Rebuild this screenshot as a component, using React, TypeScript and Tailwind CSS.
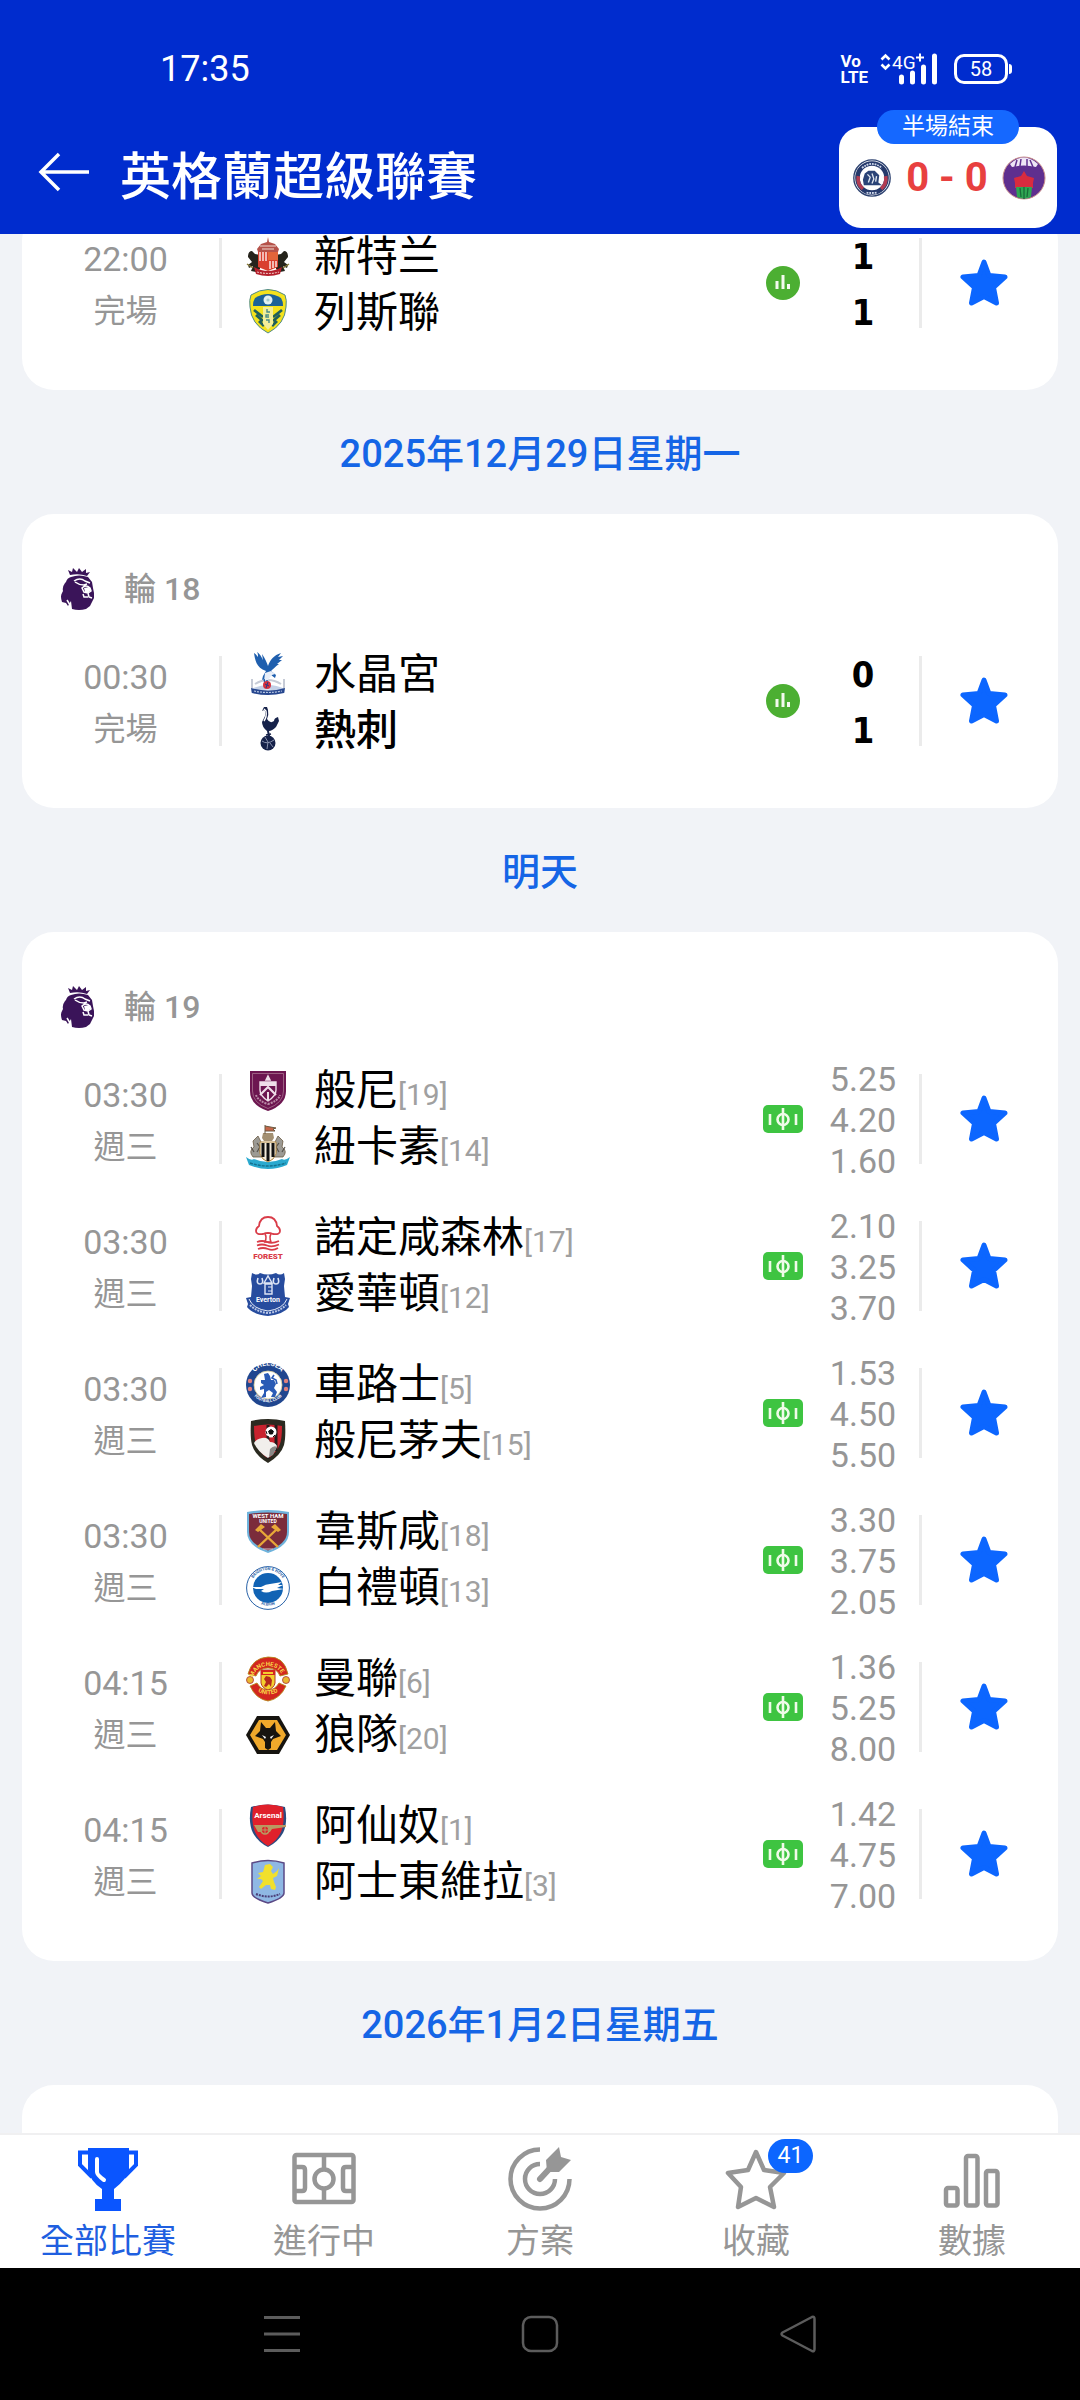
import type { ReactNode } from "react";

const CJK = "font-['Roboto','Noto_Sans_CJK_TC',sans-serif]";
const BLUE = "#0c66ff";
const GREY = "#969696";

/* ---------- club crests, all on a 44 x 44 box ---------- */

function Crest({ title, children }: { title: string; children: ReactNode }) {
  return (
    <svg viewBox="0 0 44 44" className="size-11 shrink-0 overflow-visible" role="img" aria-label={title}>
      {children}
    </svg>
  );
}

const crests: Record<string, ReactNode> = {
  sunderland: (
    <>
      <path d="M2 24q0-6 4-6l3 3q4 0 5 3v12l-4 3-5-1 2-5-4 2-1-3 4-3zM42 24q0-6-4-6l-3 3q-4 0-5 3v12l4 3 5-1-2-5 4 2 1-3-4-3z" fill="#26241c" />
      <path d="M1 31l6 4M43 31l-6 4" stroke="#8a7d3c" strokeWidth="1.5" />
      <path d="M22 4l1 5 6 2 4 5-1 3H12l-1-3 4-5 6-2z" fill="#b5524a" />
      <path d="M14 13h16M16 16h12" stroke="#f0d8d0" strokeWidth="1" />
      <path d="M12 19h20v15l-10 4-10-4z" fill="#d93f2e" />
      <path d="M22 19h10v8H22z" fill="#e2643a" />
      <path d="M14 19v9M17 19v9M20 19v9M24 28v8M27 28v7M30 28v6" stroke="#fbeeee" strokeWidth="1.4" />
      <path d="M8 34q14 8 28 0l-2 7q-12 4-24 0z" fill="#b5202c" />
      <path d="M11 39q11 3 22 0" stroke="#e9b8b4" strokeWidth="1.2" strokeDasharray="2 1" fill="none" />
    </>
  ),
  leeds: (
    <>
      <path d="M5 6Q22-5 39 6q2 5 1 12-1 17-18 26Q5 35 4 18 3 11 5 6z" fill="#f4e21c" stroke="#4f8a8c" strokeWidth="1" />
      <path d="M9 9q13-8 26 0 2 3 2 8H7q0-5 2-8z" fill="#1b6297" />
      <circle cx="22" cy="11" r="4.5" fill="#e3f1f2" />
      <circle cx="22" cy="11" r="1.6" fill="#a8cdd0" />
      <path d="M8 21l9 7M10 26l7 6M13 32l5 5M36 21l-9 7M34 26l-7 6M31 32l-5 5" stroke="#1f5f5c" strokeWidth="2.8" />
      <path d="M7 18h30" stroke="#f4e21c" strokeWidth="1.5" />
      <path d="M17 18h10v17l-5 6-5-6z" fill="#f3ee9a" />
      <path d="M21 20v3h3M23 26h-3v2h3M20 31h3v3" stroke="#4c8c88" strokeWidth="1.4" fill="none" />
    </>
  ),
  palace: (
    <>
      <path d="M6 28v10M38 28v10M9 33q13-8 26 0" stroke="#c6cbd6" strokeWidth="2" fill="none" />
      <path d="M5 38q17-8 34 0v4q-17-7-34 0z" fill="#c3d0e6" />
      <path d="M20 20C10 17 9 8 8 2c3 2 3 3 4 4 0-2 0-3-1-5 4 3 5 6 6 8l-1-6c3 4 5 9 6 12 2-6 6-11 13-13l-3 4 5-1-4 4 3 0-5 4 2 0c-4 3-6 5-8 7l5 4-1 3-4-3-5 3-4 2 1-4z" fill="#1f5fae" />
      <path d="M19 22l6-2 4 3-3 1-4 5-4 1z" fill="#e8eef8" />
      <path d="M18 28l1 4M21 29l0 3" stroke="#1f5fae" strokeWidth="1.5" />
      <circle cx="21" cy="34" r="4" fill="#d5323f" />
      <path d="M19 33l4 2M22 31l-2 6" stroke="#2a3c86" strokeWidth="1" />
      <path d="M5 37q17 5 34 0l-1 5q-16 4-32 0z" fill="#27478f" />
      <path d="M8 40q14 3 28 0" stroke="#b9c8e4" strokeWidth="1.2" fill="none" strokeDasharray="2 1" />
    </>
  ),
  spurs: (
    <>
      <path d="M18 0h3l1 3q1 5-1 9 3 5 7 2 0-3 4-4l1 4-3 6q-4 4-7 4l1 5-2 0-1-5q-5-4-5-9l3-6q1-5-1-6l-2 1z" fill="#16224a" />
      <path d="M18 2l2 2q1 6-2 10" stroke="#fff" strokeWidth="1.4" fill="none" />
      <path d="M20 28l5-1" stroke="#16224a" strokeWidth="1.5" />
      <circle cx="22" cy="36" r="7.5" fill="#16224a" />
      <path d="M16 34q5 4 12-1M19 30l3 5-1 7M24 36l3 4" stroke="#8992ae" strokeWidth="1" fill="none" />
    </>
  ),
  burnley: (
    <>
      <path d="M4 2h36v20q0 14-18 20Q4 36 4 22z" fill="#6d1650" />
      <path d="M6.5 4.5h31V22q0 12-15.5 17.5Q6.5 34 6.5 22z" fill="none" stroke="#a8728f" strokeWidth="0.8" />
      <path d="M14 13h16v8q0 6-8 11-8-5-8-11z" fill="none" stroke="#efdfe9" strokeWidth="1.4" />
      <path d="M14 13h16v4H14z" fill="#efdfe9" />
      <path d="M22 7l2 4h-4z" fill="#efdfe9" stroke="#efdfe9" strokeWidth="1.5" />
      <path d="M14 26l8-8 8 8" stroke="#efdfe9" strokeWidth="2.2" fill="none" />
      <path d="M22 23v8" stroke="#efdfe9" strokeWidth="2" />
      <path d="M10 26q2 6 12 9 10-3 12-9" fill="none" stroke="#b98aa6" strokeWidth="2" strokeDasharray="2 1" />
    </>
  ),
  newcastle: (
    <>
      <path d="M0 32q5 4 8 2 14 6 28 0 3 2 8-2l-3 8q-19 8-38 0z" fill="#2aa9cf" />
      <path d="M4 38q18 6 36 0" stroke="#14718f" strokeWidth="1.4" strokeDasharray="3 1" fill="none" />
      <path d="M7 32q-5-6 1-10l-1-6 5-5 3 6-2 7 3 8zM37 32q5-6-1-10l1-6-5-5-3 6 2 7-3 8z" fill="#9c9a94" stroke="#6b5a42" strokeWidth="0.8" />
      <path d="M11 18l3 4-3 5M33 18l-3 4 3 5M5 22l3 5M39 22l-3 5" stroke="#55504a" strokeWidth="1.2" fill="none" />
      <path d="M16 13l1-5h10l1 5-2 3h-8z" fill="#a39072" />
      <path d="M19 0v9M19 1l11 2-3 1 2 2H19" fill="#c4674a" stroke="#6b5a42" strokeWidth="1" />
      <path d="M14 17h16v12q-2 6-8 8-6-2-8-8z" fill="#f3ecdc" stroke="#b48b45" strokeWidth="1" />
      <path d="M17 18v14M22 18v18M27 18v14" stroke="#111" strokeWidth="3" />
    </>
  ),
  forest: (
    <>
      <path d="M17 18q-7 1-7-3 0-3 3-5 1-9 9-9t9 9q3 2 3 5 0 4-7 3-5-2-10 0z" fill="#fff" stroke="#d93c48" strokeWidth="1.8" />
      <path d="M19 18q2 3 0 8h6q-2-5 0-8" fill="#fff" stroke="#d93c48" strokeWidth="1.6" />
      <path d="M11 26q5-2 10 0t12-1M11 29.5q5-2 10 0t12-1M12 33q5-2 10 0t10-1" stroke="#d93c48" strokeWidth="1.8" fill="none" />
      <text x="22" y="43" textAnchor="middle" fontSize="8" fontWeight="900" fill="#d93c48" className="font-[Roboto]">
        FOREST
      </text>
    </>
  ),
  everton: (
    <>
      <path d="M6 1q5 3 8 0 8 3 16 0 4 3 8 0l1 6-1 7 1 11 5 1-2 6 1 3q-5 7-21 9Q6 42 1 35l1-3-2-6 5-1 1-11-1-7z" fill="#274c9e" />
      <path d="M12 6q-2 6 2 6t2-6M28 6q-2 6 2 6t2-6" stroke="#dfe6f5" strokeWidth="1.6" fill="none" />
      <path d="M18 11l4-7 4 7zM19 12h7v10h-7z" fill="none" stroke="#dfe6f5" strokeWidth="1.4" />
      <path d="M22 15h4M22 19h4" stroke="#dfe6f5" strokeWidth="1.2" />
      <path d="M3 27q4 10 19 12 15-2 19-12" fill="none" stroke="#e8edf8" strokeWidth="1" />
      <path d="M4 33q7 7 18 8 11-1 18-8" fill="none" stroke="#b9c6e6" strokeWidth="2" strokeDasharray="2 1" />
      <text x="22" y="30" textAnchor="middle" fontSize="7" fontWeight="700" fill="#fff" className="font-[Roboto]">
        Everton
      </text>
    </>
  ),
  chelsea: (
    <>
      <circle cx="22" cy="22" r="22" fill="#20468f" />
      <circle cx="22" cy="22" r="14" fill="#fff" stroke="#d8cf9a" strokeWidth="0.8" />
      <path d="M18 11l4-1 2 3 1 4 3 0 2 4-2 4 3 4-2 5-4 0 2-4-4-3-3 2 0 5-5 1 3-5 0-4-4 1 0-3 4-2-3-2 0-3 4 0z" fill="#2a5bb5" />
      <path d="M28 12l-2 3 4 2 1 4" stroke="#2a5bb5" strokeWidth="1.6" fill="none" />
      <g fill="#e0807c">
        <circle cx="4" cy="18" r="2.2" />
        <circle cx="4" cy="26" r="2.2" />
        <circle cx="40" cy="18" r="2.2" />
        <circle cx="40" cy="26" r="2.2" />
      </g>
      <path id="chelseaTop" d="M5.5 19a16.5 16.5 0 0 1 33 0" fill="none" />
      <path id="chelseaLow" d="M3 24a19.5 19.5 0 0 0 38 0" fill="none" />
      <text fontSize="7" fontWeight="700" fill="#fff" className="font-[Roboto]">
        <textPath href="#chelseaTop" startOffset="50%" textAnchor="middle">CHELSEA</textPath>
      </text>
      <text fontSize="4" fontWeight="700" fill="#fff" className="font-[Roboto]">
        <textPath href="#chelseaLow" startOffset="50%" textAnchor="middle">FOOTBALL CLUB</textPath>
      </text>
    </>
  ),
  bournemouth: (
    <>
      <path d="M5 2q17-4 34 0 1 16-1 24-3 10-16 18Q9 36 6 26 4 18 5 2z" fill="#2b2a20" />
      <path d="M8 7q14-3 28 0 0 12-2 18-3 8-12 15-9-7-12-15Q8 19 8 7z" fill="#c8232e" />
      <path d="M22 6v34M30 6v26" stroke="#231a1a" strokeWidth="3" />
      <path d="M8 24q2-4 8-5 6-1 8 4 5 0 7 4-2 7-9 12-10-6-14-15z" fill="#f1efec" />
      <path d="M24 30q4-4 7-2l-4 8-4 2z" fill="#8b8a88" />
      <circle cx="25" cy="13" r="5.5" fill="#fff" />
      <path d="M25 10.5l2.4 1.7-1 2.8h-2.8l-1-2.8zM20 12l1 3M29 16l-2 2M23 18l-2-1" fill="#111" stroke="#111" strokeWidth="1" />
    </>
  ),
  westham: (
    <>
      <path d="M1 2q21-4 42 0v20q0 14-21 21Q1 36 1 22z" fill="#6fb3dc" />
      <path d="M3 4q19-3 38 0v18q0 12-19 18.5Q3 34 3 22z" fill="#7b2c3b" />
      <path d="M13 19l19 18M31 19L12 37" stroke="#e8a838" strokeWidth="2.4" />
      <path d="M9 20l6-6 4 3-7 5zM35 20l-6-6-4 3 7 5z" fill="#e8a838" />
      <text x="22" y="8" textAnchor="middle" fontSize="6" fontWeight="700" fill="#fff" className="font-[Roboto]">
        WEST HAM
      </text>
      <text x="22" y="13" textAnchor="middle" fontSize="5" fontWeight="700" fill="#fff" className="font-[Roboto]">
        UNITED
      </text>
      <path d="M17 39h10" stroke="#d9b9c0" strokeWidth="1" />
    </>
  ),
  brighton: (
    <>
      <circle cx="22" cy="22" r="21.4" fill="#fff" stroke="#2862a8" strokeWidth="1" />
      <circle cx="22" cy="22" r="15" fill="#1163b4" />
      <path d="M5 21l10 0q5-3 9-3l12-2-4 3 5 0-6 3 7 1-12 2q-6 3-11 0l3-2-8 0z" fill="#fff" />
      <path id="brightonTop" d="M5 21a17 17 0 0 1 34 0" fill="none" />
      <path id="brightonLow" d="M2.5 24a20 20 0 0 0 39 0" fill="none" />
      <text fontSize="4" fontWeight="700" fill="#2862a8" className="font-[Roboto]">
        <textPath href="#brightonTop" startOffset="50%" textAnchor="middle">BRIGHTON &amp; HOVE</textPath>
      </text>
      <text fontSize="4" fontWeight="700" fill="#2862a8" className="font-[Roboto]">
        <textPath href="#brightonLow" startOffset="50%" textAnchor="middle">ALBION</textPath>
      </text>
    </>
  ),
  united: (
    <>
      <circle cx="22" cy="22" r="15" fill="#fff" />
      <path d="M2 17Q6 1 22 0t20 17l-8 2q-3-8-12-8t-12 8zM4 29q6 13 18 15 12-2 18-15l-7-3q-4 7-11 7t-11-7z" fill="#d3261f" stroke="#b58a1c" strokeWidth="0.9" />
      <circle cx="4" cy="23" r="3.5" fill="#e9b830" stroke="#aa3333" strokeWidth="0.8" />
      <circle cx="40" cy="23" r="3.5" fill="#e9b830" stroke="#aa3333" strokeWidth="0.8" />
      <path d="M15 13h14v13q-1 5-7 7-6-2-7-7z" fill="#f3cf2e" stroke="#b33a20" strokeWidth="1" />
      <path d="M15 13h14v5H15z" fill="#d3261f" />
      <path d="M17 16h10" stroke="#f3cf2e" strokeWidth="2" />
      <path d="M20 19l4 1 2 3-1 7-2-3-3 3-2-1 2-4-2-3z" fill="#b52a1d" />
      <path id="unitedTop" d="M8 18a15 14 0 0 1 28 0" fill="none" />
      <path id="unitedLow" d="M6 29a17.5 14 0 0 0 32 0" fill="none" />
      <text fontSize="6" fontWeight="700" fill="#f8d648" className="font-[Roboto]">
        <textPath href="#unitedTop" startOffset="50%" textAnchor="middle">MANCHESTER</textPath>
      </text>
      <text fontSize="6" fontWeight="700" fill="#f8d648" className="font-[Roboto]">
        <textPath href="#unitedLow" startOffset="50%" textAnchor="middle">UNITED</textPath>
      </text>
    </>
  ),
  wolves: (
    <>
      <path d="M11 3h22l11 19-11 19H11L0 22z" fill="#16140f" />
      <path d="M13 7h18l9 15-9 15H13L4 22z" fill="#f0a92b" />
      <path d="M15 9l5 6h4l5-6 1 9 5 5-8 3-2 3v6l-3 2-3-2v-6l-2-3-8-3 5-5z" fill="#16140f" />
      <path d="M16 22l4 2-1 2zM28 22l-4 2 1 2z" fill="#fff" />
    </>
  ),
  arsenal: (
    <>
      <path d="M5 3q17-5 34 0 3 16-2 26-5 9-15 14Q12 38 7 29 2 19 5 3z" fill="#2a4b80" />
      <path d="M7 3q15-5 30 0 2 15-2 25-4 9-13 14-9-5-13-14Q5 18 7 3z" fill="#e0202b" />
      <path d="M8 21h32v2l-14 2-2 3H12z" fill="#b89a62" />
      <circle cx="19" cy="26" r="4" fill="#e0202b" stroke="#b89a62" strokeWidth="1.7" />
      <path d="M19 22v8M15 26h8" stroke="#b89a62" strokeWidth="1" />
      <text x="22" y="14" textAnchor="middle" fontSize="8" fontWeight="700" fill="#fff" className="font-[Roboto]">
        Arsenal
      </text>
    </>
  ),
  villa: (
    <>
      <path d="M6 3q16-5 32 0v30q0 5-16 10Q6 38 6 33z" fill="#8fb8e4" stroke="#5b4a86" strokeWidth="1.5" />
      <path d="M19 5l5-1 3 3-2 4 2 3 4-3 2-3-2 8-4 2 1 4 2 5-1 3-4-1-1-4-4 0-5 4-2-2 4-6-2-2-4 0 4-3-3-3 5-1z" fill="#f1e02c" />
      <path d="M10 34q12 5 24 0" stroke="#4b3e78" strokeWidth="2" strokeDasharray="2 1" fill="none" />
    </>
  ),
  arema: (
    <>
      <circle cx="22" cy="22" r="20" fill="#fff" stroke="#2d4270" strokeWidth="1.5" />
      <circle cx="22" cy="22" r="16" fill="none" stroke="#25396b" strokeWidth="5" />
      <path d="M7 20a15 15 0 0 0 5 14M37 20a15 15 0 0 1-5 14" stroke="#b23d52" strokeWidth="4" fill="none" />
      <path d="M14 17l4-3 7 0 5 5-1 8 4 3H13l-1-6z" fill="#2a4377" />
      <path d="M17 18l3 3-2 6M22 17l2 6-2 5M27 20l-1 6" stroke="#dfe6f0" strokeWidth="1.5" fill="none" />
      <path d="M11 11q11-9 22 0M16 38q6 1 12 0" stroke="#cfd8ea" strokeWidth="2" strokeDasharray="2 1" fill="none" />
    </>
  ),
  persik: (
    <>
      <circle cx="22" cy="22" r="21" fill="#5f2f8f" stroke="#c98d8a" strokeWidth="1" />
      <path d="M8 8Q22-5 36 8l-2 3q-12-3-24 0z" fill="#eee6f5" />
      <path d="M13 11l2-7M18 10l1-7M25 10V3M31 11l-3-7" stroke="#5f2f8f" strokeWidth="1.5" />
      <path d="M22 15l3 5 7 2-1 5 0 5H13v-5l-1-5 7-2z" fill="#d92b3f" />
      <path d="M14 31h16l-1 10q-7 3-14 0z" fill="#2fa653" />
      <path d="M22 31v12M18 32l1 9M26 32l-1 9" stroke="#186b39" strokeWidth="1.3" />
    </>
  ),
};

/* ---------- small icons ---------- */

function LeagueLion() {
  return (
    <svg viewBox="0 0 36 42" className="h-[42px] w-9" role="img" aria-label="英超">
      <path d="M10 7L8 2l4 2 1-4 4 4 2-4 3 4 4-3v4l4-1-3 4q-8-3-17-1z" fill="#3a1459" />
      <path d="M11 9q8-3 17 0l4 5 1 6 1 5 0 5-4 8-4 3q-7 2-14 0l-1-8-3 5-2-3-4-1q-2-6 0-9l1-2q-1-4 2-8l1-1q1-4 5-5z" fill="#3a1459" />
      <path d="M14 13q6-4 11 0l5 2M15 14q4 3 9 3l3-1M22 20q4-4 8 0l1 3-3 2-4-1zM28 25l1 4 3 1M23 26l1 3 4 0" stroke="#fff" strokeWidth="1.5" fill="none" />
      <path d="M24 20l5-1 2 3-3 3-3-1z" fill="#fff" />
      <path d="M7 32l3 5" stroke="#fff" strokeWidth="1.5" />
    </svg>
  );
}

function StatsBadge() {
  return (
    <svg viewBox="0 0 34 34" className="size-[34px]" aria-hidden="true">
      <circle cx="17" cy="17" r="17" fill="#4caf32" />
      <path d="M11 15v8M17 9v14M22.5 18v5" stroke="#f3faee" strokeWidth="3" />
    </svg>
  );
}

function PitchBadge() {
  return (
    <svg viewBox="0 0 40 28" className="h-7 w-10" aria-hidden="true">
      <rect width="40" height="28" rx="5" fill="#3ec441" />
      <path d="M7 9v11M33 9v11M20 3v22" stroke="#f0fbe9" strokeWidth="2.6" />
      <circle cx="20" cy="14.5" r="5.5" fill="none" stroke="#f0fbe9" strokeWidth="2.6" />
    </svg>
  );
}

function FilledStar() {
  return (
    <svg viewBox="0 0 48 48" className="size-12" aria-hidden="true">
      <path
        d="M24 3l5 13.500 16 1.500L33.500 28.500 36.500 44 24 37.500 11.500 44l3-15.500L3 18l16-1.500z"
        fill={BLUE}
        stroke={BLUE}
        strokeWidth="5"
        strokeLinejoin="round"
      />
    </svg>
  );
}

/* ---------- data ---------- */

type Team = { name: string; crest: string; rank?: number; winner?: boolean };
type Match = { time: string; note: string; home: Team; away: Team; score?: [number, number]; odds?: string[] };

const sunday: Match[] = [
  { time: "22:00", note: "完場", home: { name: "新特兰", crest: "sunderland" }, away: { name: "列斯聯", crest: "leeds" }, score: [1, 1] },
];

const monday: Match[] = [
  { time: "00:30", note: "完場", home: { name: "水晶宮", crest: "palace" }, away: { name: "熱刺", crest: "spurs", winner: true }, score: [0, 1] },
];

const tomorrow: Match[] = [
  { time: "03:30", note: "週三", home: { name: "般尼", crest: "burnley", rank: 19 }, away: { name: "紐卡素", crest: "newcastle", rank: 14 }, odds: ["5.25", "4.20", "1.60"] },
  { time: "03:30", note: "週三", home: { name: "諾定咸森林", crest: "forest", rank: 17 }, away: { name: "愛華頓", crest: "everton", rank: 12 }, odds: ["2.10", "3.25", "3.70"] },
  { time: "03:30", note: "週三", home: { name: "車路士", crest: "chelsea", rank: 5 }, away: { name: "般尼茅夫", crest: "bournemouth", rank: 15 }, odds: ["1.53", "4.50", "5.50"] },
  { time: "03:30", note: "週三", home: { name: "韋斯咸", crest: "westham", rank: 18 }, away: { name: "白禮頓", crest: "brighton", rank: 13 }, odds: ["3.30", "3.75", "2.05"] },
  { time: "04:15", note: "週三", home: { name: "曼聯", crest: "united", rank: 6 }, away: { name: "狼隊", crest: "wolves", rank: 20 }, odds: ["1.36", "5.25", "8.00"] },
  { time: "04:15", note: "週三", home: { name: "阿仙奴", crest: "arsenal", rank: 1 }, away: { name: "阿士東維拉", crest: "villa", rank: 3 }, odds: ["1.42", "4.75", "7.00"] },
];

/* ---------- match list ---------- */

function TeamLine({ team }: { team: Team }) {
  return (
    <div className="flex h-14 items-center gap-6">
      <Crest title={team.name}>{crests[team.crest]}</Crest>
      <p className={`pt-1 text-[42px] leading-[56px] whitespace-nowrap text-black ${team.winner ? "font-medium" : ""}`}>
        {team.name}
        {team.rank && <span className="text-[30px] text-[#a0a0a0]">[{team.rank}]</span>}
      </p>
    </div>
  );
}

function MatchRow({ match }: { match: Match }) {
  return (
    <li className="flex h-[147px] items-center">
      <div className="flex w-[197px] flex-col items-center pt-1 pl-[10px] text-[#969696]">
        <time className="text-[34px] leading-[52px]">{match.time}</time>
        <span className="text-[32px] leading-[52px]">{match.note}</span>
      </div>
      <span className="h-[90px] w-[3px] bg-[#ebebeb]" />
      <div className="flex-1 pl-6">
        <TeamLine team={match.home} />
        <TeamLine team={match.away} />
      </div>
      <div className="flex w-10 justify-center">{match.score ? <StatsBadge /> : <PitchBadge />}</div>
      <div className="ml-[18px] flex w-[84px] flex-col items-center pt-1">
        {match.score?.map((goals, i) => (
          <span key={i} className="font-['DejaVu_Sans_Condensed','DejaVu_Sans',sans-serif] text-[36px] leading-[56px] font-bold text-black">
            {goals}
          </span>
        ))}
        {match.odds?.map((odd, i) => (
          <span key={i} className="text-[34px] leading-[41px] text-[#969696]">{odd}</span>
        ))}
      </div>
      <span className="ml-[14px] h-[90px] w-[3px] bg-[#ebebeb]" />
      <div className="flex w-[136px] justify-center pr-3">
        <button type="button" aria-label="收藏" aria-pressed="true">
          <FilledStar />
        </button>
      </div>
    </li>
  );
}

function MatchCard({ round, matches }: { round?: number; matches: Match[] }) {
  return (
    <section className="mx-[22px] rounded-[32px] bg-white pb-[34px]">
      {round && (
        <div className="flex h-[113px] items-center gap-7 pt-9 pl-[38px] text-[#969696]">
          <LeagueLion />
          <h3 className="text-[32px] leading-10 font-medium">輪 {round}</h3>
        </div>
      )}
      <ul>
        {matches.map((m) => (
          <MatchRow key={m.home.name} match={m} />
        ))}
      </ul>
    </section>
  );
}

function DateHeading({ children }: { children: ReactNode }) {
  return (
    <h2 className="flex h-[124px] items-center justify-center pt-1 text-[38px] leading-[48px] font-medium text-[#1565e6]">
      {children}
    </h2>
  );
}

/* ---------- header ---------- */

function StatusBar() {
  return (
    <div className="flex h-[110px] items-center justify-between pt-7 pr-[68px] pl-40">
      <span className="text-[36px] leading-[44px]">17:35</span>
      <div className="flex items-center">
        <span className="mr-3 text-[17px] leading-[16px] font-bold">
          Vo
          <br />
          LTE
        </span>
        <svg viewBox="0 0 58 32" className="h-8 w-[58px] overflow-visible" aria-label="4G+" role="img">
          <path d="M1.5 6.5l4-4 4 4M1.5 11.5l4 4 4-4" stroke="#fff" strokeWidth="2.6" fill="none" />
          <text x="12" y="16" fontSize="19" fill="#fff" className="font-[Roboto]">4G</text>
          <path d="M36 4.5h8M40 0.5v8" stroke="#fff" strokeWidth="2" />
          <path d="M21.5 24v5M32.5 20v9M43.5 14v15M54.5 3v26" stroke="#fff" strokeWidth="5" strokeLinecap="round" />
        </svg>
        <div className="ml-4 flex h-[30px] w-[54px] items-center justify-center rounded-[10px] border-3 border-white text-[20px] leading-6">
          58
        </div>
        <span className="ml-px h-[10px] w-[3px] rounded-r-sm bg-white" />
      </div>
    </div>
  );
}

function LiveScore() {
  return (
    <a href="#live" className="mr-[23px] flex w-[218px] flex-col items-center">
      <span className="z-10 -mb-[17px] rounded-full bg-[#1568ff] px-[25px] text-[23px] leading-[34px] text-white">半場結束</span>
      <span className="flex h-[101px] w-full items-center justify-between rounded-[22px] bg-white pr-[11px] pl-[13px]">
        <svg viewBox="0 0 44 44" className="size-10" aria-hidden="true">{crests.arema}</svg>
        <strong className="text-[40px] leading-[44px] font-bold whitespace-nowrap text-[#e8403f]">0 - 0</strong>
        <svg viewBox="0 0 44 44" className="size-11" aria-hidden="true">{crests.persik}</svg>
      </span>
    </a>
  );
}

function Header() {
  return (
    <header className="z-10 shrink-0 bg-[#002cce] text-white">
      <StatusBar />
      <div className="flex h-[124px] items-start justify-between">
        <div className="flex items-start gap-[30px] pt-[34px] pl-[38px]">
          <button type="button" aria-label="返回" className="mt-2">
            <svg viewBox="0 0 52 40" className="h-10 w-[52px]" fill="none" stroke="#fff" strokeWidth="3.5">
              <path d="M51 20H3M21 2L3 20l18 18" />
            </svg>
          </button>
          <h1 className="text-[51px] leading-[68px] font-medium">英格蘭超級聯賽</h1>
        </div>
        <LiveScore />
      </div>
    </header>
  );
}

/* ---------- bottom bars ---------- */

const tabs = [
  {
    label: "全部比賽",
    icon: (
      <>
        <path d="M12 1h41v22q-2 9-15 19v10h7v12H19V52h7V42Q14 34 12 23z" fill="#0a55ff" />
        <path d="M12 5.500H4V18l12 12M52 5.500h8V18L48 30" stroke="#0a55ff" strokeWidth="4" fill="none" />
        <path d="M21 12v13q0 3 7 8" stroke="#fff" strokeWidth="4" strokeLinecap="round" fill="none" />
      </>
    ),
  },
  {
    label: "進行中",
    icon: (
      <g fill="none" stroke={GREY} strokeWidth="4.5">
        <rect x="2.5" y="8" width="59" height="47" rx="2" />
        <circle cx="32" cy="32" r="9.5" />
        <path d="M32 8v14M32 42v13M4 20h6q3 0 3 3v18q0 3-3 3H4M60 20h-6q-3 0-3 3v18q0 3 3 3h6" />
      </g>
    ),
  },
  {
    label: "方案",
    icon: (
      <>
        <path d="M32 2.5A29.5 29.5 0 1 0 61.5 32M32 17a15 15 0 1 0 15 15" fill="none" stroke={GREY} strokeWidth="4.5" />
        <path d="M32 32l12-13" stroke={GREY} strokeWidth="6" strokeLinecap="round" />
        <path d="M38 13L51 0l2 10 10 3-12 12H39z" fill={GREY} />
      </>
    ),
  },
  {
    label: "收藏",
    badge: 41,
    icon: (
      <path
        d="M32 5l8 18 20 3-14 14 4 20-18-9-18 9 3-20L4 26l20-3z"
        fill="none"
        stroke={GREY}
        strokeWidth="4.5"
        strokeLinejoin="round"
      />
    ),
  },
  {
    label: "數據",
    icon: (
      <g fill="none" stroke={GREY} strokeWidth="4.5">
        <rect x="6" y="41" width="11.5" height="17.5" rx="2" />
        <rect x="26" y="9" width="11.5" height="49.5" rx="2" />
        <rect x="46" y="24" width="11.5" height="34.5" rx="2" />
      </g>
    ),
  },
];

function TabBar() {
  return (
    <nav className="z-10 grid shrink-0 grid-cols-5 border-t-2 border-[#f0f0f1] bg-white">
      {tabs.map((tab, i) => (
        <a
          key={tab.label}
          href={`#tab-${i}`}
          aria-current={i === 0 ? "page" : undefined}
          className={`flex h-[133px] flex-col items-center gap-2 pt-3 ${i === 0 ? "text-[#1f5fe0]" : "text-[#969696]"}`}
        >
          <span className="relative">
            <svg viewBox="0 0 64 64" className="size-16" aria-hidden="true">{tab.icon}</svg>
            {tab.badge && (
              <span className="absolute -top-2 left-11 w-[45px] rounded-full bg-[#0c66ff] text-center text-[23px] leading-[34px] text-white">
                {tab.badge}
              </span>
            )}
          </span>
          <span className="text-[34px] leading-[44px]">{tab.label}</span>
        </a>
      ))}
    </nav>
  );
}

function SystemBar() {
  return (
    <div className="flex h-[132px] shrink-0 items-center justify-center gap-[218px] bg-black">
      <button type="button" aria-label="最近使用">
        <svg viewBox="0 0 40 40" className="size-10" stroke="#5c5c5c" strokeWidth="3">
          <path d="M2 3.5h36M2 20h36M2 36.5h36" />
        </svg>
      </button>
      <button type="button" aria-label="主畫面">
        <svg viewBox="0 0 40 40" className="size-10" fill="none" stroke="#5c5c5c" strokeWidth="2.5">
          <rect x="3" y="3" width="34" height="34" rx="8" />
        </svg>
      </button>
      <button type="button" aria-label="返回上一頁">
        <svg viewBox="0 0 40 40" className="size-10" fill="none" stroke="#5c5c5c" strokeWidth="2.5" strokeLinejoin="round">
          <path d="M34 3q2.5-1 2.5 2v30q0 3-2.5 2L4.5 21.5q-2-1.5 0-3z" />
        </svg>
      </button>
    </div>
  );
}

export default function App() {
  return (
    <div className={`flex h-screen flex-col bg-[#f1f3f7] ${CJK}`}>
      <Header />
      <main className="min-h-0 flex-1 overflow-hidden">
        {/* list is scrolled part of the way down the first match */}
        <div className="-mt-[25px]">
          <MatchCard matches={sunday} />
          <DateHeading>2025年12月29日星期一</DateHeading>
          <MatchCard round={18} matches={monday} />
          <DateHeading>明天</DateHeading>
          <MatchCard round={19} matches={tomorrow} />
          <DateHeading>2026年1月2日星期五</DateHeading>
          <MatchCard round={19} matches={[]} />
        </div>
      </main>
      <TabBar />
      <SystemBar />
    </div>
  );
}
